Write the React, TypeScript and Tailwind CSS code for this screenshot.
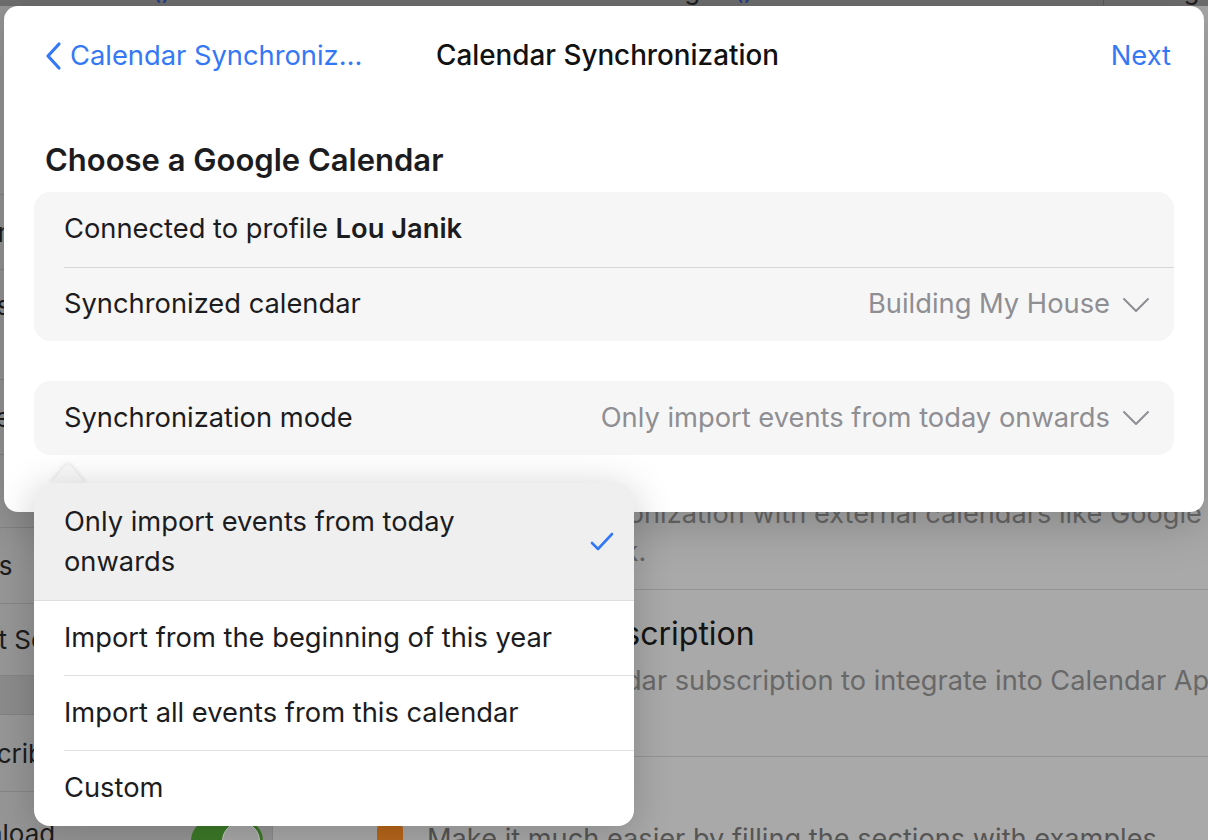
import React from "react";

const sideRows = [
  { h: 189, text: "", shift: 0, sub: "" },
  { h: 75, text: "Kalender Integration", shift: 236, sub: "" },
  { h: 110, text: "Benachrichtigungs", shift: 220, sub: "Erinnern", subShift: 96 },
  { h: 75, text: "Vorlage", shift: 84, sub: "" },
  { h: 73, text: "Ansichtsmenü new", shift: 178, sub: "" },
  { h: 76, text: "Workflows", shift: 118, sub: "" },
  { h: 72, text: "Export Settings", shift: 73, sub: "" },
];

function Chevron() {
  return (
    <svg width="28" height="16" viewBox="0 0 28 16" className="shrink-0">
      <path d="M2 2 L14 14 L26 2" fill="none" stroke="#8e8e93" strokeWidth="2" strokeLinecap="round" strokeLinejoin="round" />
    </svg>
  );
}

function Background() {
  return (
    <div className="flex h-full flex-col">
      {/* bottom of a table header, mostly hidden by the sheet */}
      <div className="flex h-[6px] shrink-0 overflow-hidden bg-[#6f6f6f] text-[26px] leading-[30px] text-[#1f1f1f]">
        <div className="-mt-[25px] flex w-[1208px] items-start">
          <span className="-ml-[17px] w-[170px]">Bearbeiten</span>
          <span className="ml-[4px] w-[380px] text-[#233a8a]">()</span>
          <span className="w-[220px]">In Bearbeitung</span>
          <span className="w-[380px] text-[#233a8a]">()</span>
          <span className="border-l border-[#5a5a5a] pl-[10px]">Erledigt</span>
        </div>
      </div>
      <div className="flex flex-1">
        <aside className="flex w-[273px] shrink-0 flex-col overflow-hidden border-r border-[#8c8c8c] bg-[#969696] text-[26px] text-[#1c1c1c]">
          {sideRows.map((r, i) => (
            <div
              key={i}
              style={{ height: r.h }}
              className="flex shrink-0 flex-col justify-center whitespace-nowrap border-b border-[#858585]"
            >
              {r.text && <span style={{ marginLeft: -r.shift }}>{r.text}</span>}
              {r.sub && (
                <span style={{ marginLeft: -(r.subShift ?? 0) }} className="mt-[8px] text-[20px] text-[#5e5e5e]">
                  {r.sub}
                </span>
              )}
            </div>
          ))}
          <div className="h-[39px] shrink-0 border-b border-[#828282] bg-[#8b8b8b]" />
          <div className="flex h-[77px] shrink-0 items-center whitespace-nowrap border-b border-[#858585]">
            <span className="-ml-[65px]">Subscribe</span>
          </div>
          <div className="flex h-[77px] shrink-0 items-center whitespace-nowrap pt-[6px]">
            <span className="-ml-[68px]">Download</span>
            <div className="ml-[136px] mt-[14px] flex h-[44px] w-[72px] shrink-0 items-center justify-end rounded-full bg-[#3c7a28] p-[3px]">
              <div className="h-[38px] w-[38px] rounded-full border border-[#c8c8c8] bg-[#a9a9a9]" />
            </div>
          </div>
        </aside>
        <main className="flex flex-1 flex-col bg-[#a9a9a9] pl-[136px] text-[27.2px]">
          <div className="flex h-[584px] shrink-0 flex-col justify-end whitespace-nowrap border-b border-[#949494] pb-[18px] text-[#686868]">
            <div className="mb-[8px] text-[32px] text-[#141414]">Calendar Synchronization</div>
            <div className="leading-[38px]">Enables a synchronization with external calendars like Google</div>
            <div className="leading-[38px]">Calendar, Outlook.</div>
          </div>
          <div className="flex h-[167px] shrink-0 flex-col whitespace-nowrap border-b border-[#949494] pl-[10px] pt-[24px]">
            <div className="text-[32px] leading-[40px] text-[#141414]">Calendar Subscription</div>
            <div className="ml-[6px] mt-[8px] leading-[38px] text-[#686868]">Creates a calendar subscription to integrate into Calendar Apps</div>
          </div>
          <div className="flex items-start whitespace-nowrap pl-[18px] pt-[62px] text-[#555]">
            <div className="-ml-[50px] mr-[24px] mt-[4px] h-[26px] w-[26px] shrink-0 rounded-[6px] bg-[#b8671a]" />
            <span>Make it much easier by filling the sections with examples</span>
          </div>
        </main>
      </div>
    </div>
  );
}

function Sheet() {
  return (
    <div className="absolute left-[4px] top-[6px] h-[506px] w-[1200px] rounded-[14px] bg-white shadow-[0_10px_50px_rgba(0,0,0,0.22)]">
      <div className="grid h-[100px] grid-cols-[1fr_auto_1fr] items-center pl-[40px] pr-[33px] text-[27.3px]">
        <div className="flex items-center gap-[8px] text-[#3478f6]">
          <svg width="18" height="30" viewBox="0 0 18 30" className="shrink-0">
            <path d="M15 3 L4 15 L15 27" fill="none" stroke="#3478f6" strokeWidth="3.2" strokeLinecap="round" strokeLinejoin="round" />
          </svg>
          <span>Calendar Synchroniz…</span>
        </div>
        <div className="text-[27.8px] font-medium text-[#111]">Calendar Synchronization</div>
        <div className="justify-self-end text-[#3478f6]">Next</div>
      </div>

      <div className="px-[30px]">
        <h2 className="mt-[36px] pl-[11px] text-[31px] font-semibold leading-[36px] text-[#1c1c1e]">
          Choose a Google Calendar
        </h2>

        <div className="mt-[14px] rounded-[16px] bg-[#f6f6f6] text-[27.3px] text-[#1c1c1e]">
          <div className="flex h-[75px] items-center pl-[30px]">
            <span>
              Connected to profile <b className="font-semibold">Lou Janik</b>
            </span>
          </div>
          <div className="ml-[30px] h-px bg-[#d8d8d8]" />
          <div className="flex h-[73px] items-center justify-between pl-[30px] pr-[24px]">
            <span>Synchronized calendar</span>
            <span className="flex items-center gap-[12px] text-[#8e8e93]">
              Building My House
              <Chevron />
            </span>
          </div>
        </div>

        <div className="mt-[40px] flex h-[74px] items-center justify-between rounded-[16px] bg-[#f6f6f6] pl-[30px] pr-[24px] text-[27.3px] text-[#1c1c1e]">
          <span>Synchronization mode</span>
          <span className="flex items-center gap-[12px] text-[#8e8e93]">
            Only import events from today onwards
            <Chevron />
          </span>
        </div>
      </div>
    </div>
  );
}

function Popover() {
  const options = [
    "Import from the beginning of this year",
    "Import all events from this calendar",
    "Custom",
  ];
  return (
    <>
      <svg
        width="36"
        height="22"
        viewBox="0 0 36 22"
        className="absolute left-[50px] top-[463px] drop-shadow-[0_-1px_2px_rgba(0,0,0,0.12)]"
      >
        <path d="M0 21 L15 3 Q18 0 21 3 L36 21 Z" fill="#f9f9f9" />
      </svg>
      <div className="absolute left-[34px] top-[483px] w-[600px] overflow-hidden rounded-[16px] bg-white text-[27.3px] text-[#1c1c1e] shadow-[0_6px_40px_rgba(0,0,0,0.2)]">
        <div className="flex h-[118px] items-center justify-between border-b border-[#dedede] bg-[#efefef] pl-[30px] pr-[20px]">
          <div className="leading-[40px]">
            Only import events from today
            <br />
            onwards
          </div>
          <svg width="24" height="20" viewBox="0 0 24 20" className="shrink-0">
            <path d="M2 11 L8 17 L22 2" fill="none" stroke="#3478f6" strokeWidth="2.6" strokeLinecap="round" strokeLinejoin="round" />
          </svg>
        </div>
        {options.map((o, i) => (
          <div key={o} className="pl-[30px]">
            <div className={`flex h-[75px] items-center ${i < options.length - 1 ? "border-b border-[#e0e0e0]" : ""}`}>
              {o}
            </div>
          </div>
        ))}
      </div>
    </>
  );
}

export default function App() {
  return (
    <div className="relative h-[840px] w-[1208px] overflow-hidden bg-[#a9a9a9] font-[Inter,'Noto_Sans',sans-serif]">
      <Background />
      <Sheet />
      <Popover />
    </div>
  );
}
